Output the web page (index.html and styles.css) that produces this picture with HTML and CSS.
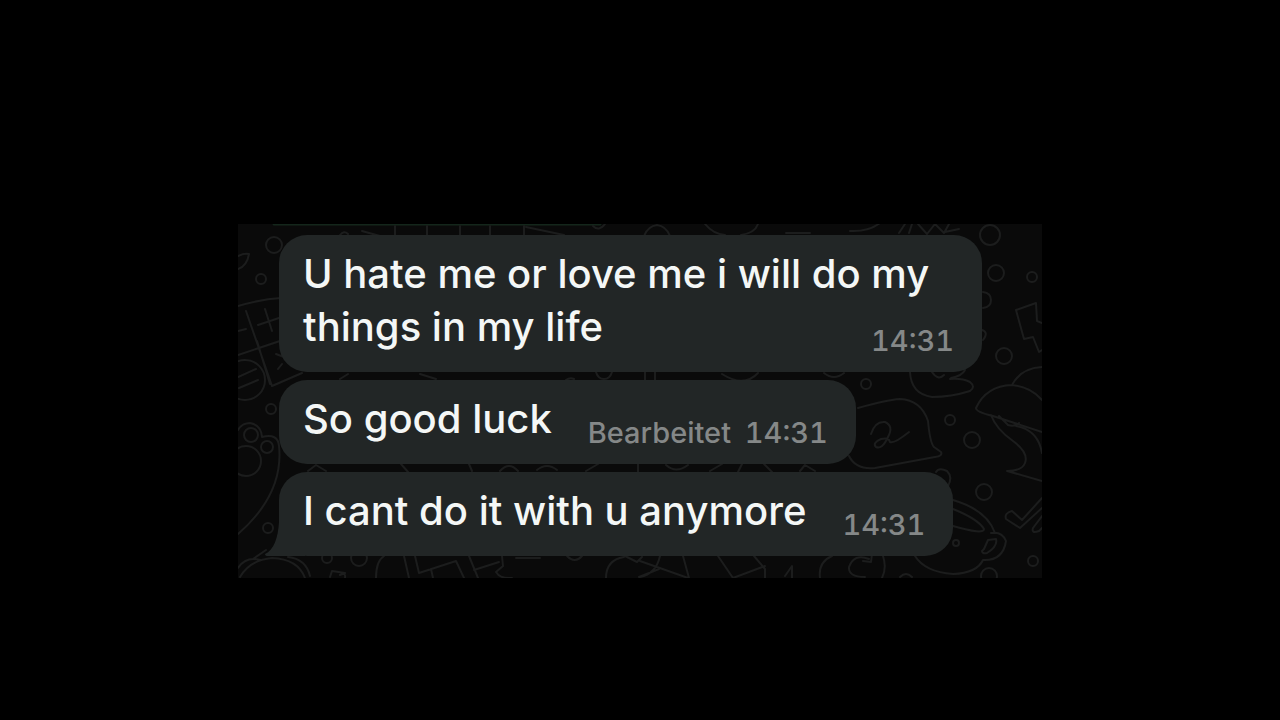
FILE: index.html
```html
<!DOCTYPE html>
<html lang="de">
<head>
  <meta charset="utf-8">
  <title>Chat</title>
  <link rel="stylesheet" href="styles.css">
</head>
<body>

  <main class="chat">
    <svg class="wallpaper" viewBox="238 224 804 354" preserveAspectRatio="xMidYMid slice" aria-hidden="true">
      <!-- top edge -->
      <path class="line-green" d="M274 224 H600"/>
      <path d="M395 226v9M427 226v9M460 226v9M490 226v9M524 226v9M526 227l38 8M593 226q6 6 12-2"/>
      <path d="M340 235q4-5 8-1M362 231l18 5M644 236q4-10 13-11q9 1 13 11M705 224q8 10 20 11M741 235q14-2 17-11M786 233h24M850 231q18 1 30-8M899 233l6-9M909 233l3-9M918 224l9 10l8-10l9 9l5-9M945 232l14-3"/>
      <!-- left side -->
      <circle cx="274" cy="245" r="8"/>
      <circle cx="261" cy="279" r="5"/>
      <path d="M238 256q6-3 11-2q-2 12-11 15"/>
      <path d="M238 306q24-7 43-8M246 311l26 75M238 331l8-2M238 355l42-14M258 325l21-7M265 309l7 22M257 341l13 43M272 386l30-13M276 354l8 3M282 364l-4 5"/>
      <circle cx="245" cy="380" r="20"/>
      <path d="M238 377l18-8M239 388l19-8"/>
      <circle cx="271" cy="409" r="5"/>
      <path d="M238 430q4-7 12-7q11 2 12 14q16-4 17 9q5 48-41 88"/>
      <circle cx="251" cy="435" r="7"/>
      <circle cx="267" cy="447" r="6"/>
      <circle cx="246" cy="461" r="15"/>
      <circle cx="268" cy="528" r="5"/>
      <!-- right side -->
      <circle cx="990" cy="235" r="10"/>
      <circle cx="996" cy="273" r="8"/>
      <circle cx="1032" cy="277" r="5"/>
      <path d="M983 292q8 1 8 8q0 7-8 8"/>
      <path d="M1042 323l-5-2l-1-18l-20 7l8 29l9-2l6 15l3-2"/>
      <circle cx="1004" cy="356" r="8"/>
      <path d="M982 330q7 2 1 10"/>
      <circle cx="866" cy="384" r="5"/>
      <path d="M910 372q1 22 22 25q19 0 38-6q6-4 0-9q-8-4-20-3M932 372q6 9 12 3M951 378q11-2 14-8"/>
      <path d="M858 408q28-8 42-9q21 1 28 22q2 22 6 26l7 5q2 4-6 5l-60 11q-19 2-26-12"/>
      <path d="M871 434q4-13 14-12q9 4 3 15q-6 13-12 10q-4-4 5-8q8-2 9 3q4 2 19-10"/>
      <circle cx="950" cy="420" r="5"/>
      <circle cx="972" cy="440" r="8"/>
      <path d="M976 408q10-22 36-23q19 2 30 15M976 408q0 4 17 8l49 16M1012 385q9-17 30-18M991 415q5 14 22 26q16 12 12 22q-3 8-18 8l35 10M999 416l9 9q7 2 11-2M1016 426q22 4 26 27"/>
      <path d="M936 472q3-5 11-1q6 6 1 15l-9-1"/>
      <circle cx="984" cy="492" r="8"/>
      <path d="M1042 498l-20 22l-10-9q-8 2-6 8l14 9l22-20M1042 516l-9 12q-2 6 6 3l3-3"/>
      <path d="M953 500q34 10 42 33M953 509q25 10 31 20q0 6-31-3M915 556q10 16 38 18q24-1 30-14q20 1 23-19q-4-10-15-8M984 549l4-9l8-1q2 7-9 14q-5 1-5-2z"/>
      <circle cx="956" cy="543" r="3"/>
      <circle cx="1033" cy="561" r="5"/>
      <circle cx="989" cy="576" r="8"/>
      <!-- gaps between the bubbles -->
      <path d="M596 372q2 7 8 7t8-7M645 372v8M655 372v8M722 374q22 14 36-1M824 373q10 8 20 0M566 380q4-3 8-1M420 374l16 5M348 374l-8 5"/>
      <path d="M308 471l8-6l10 6M500 471q9-10 18 0M537 470q10-8 20 0M586 471l12-7M638 464v8M666 465q10 9 22 0M710 471l12-7M742 464l-4 8M764 464l8 8M800 471l5-6l10 6M469 464l3 7M401 464l7 8"/>
      <!-- bottom edge -->
      <path d="M238 568q8-12 22-8M240 577q10-17 32-19q26 1 33 20M266 550l-13 9M288 557q18 2 22 19M330 577l2-6l13 2M340 575q6-3 5 3"/>
      <circle cx="327" cy="558" r="5"/>
      <circle cx="359" cy="558" r="8"/>
      <path d="M376 578q0-17 8-22M404 556l5 22M415 556l4 17l37-12l8 17M433 578l-2-9M469 556l9 22M474 570l25-8M502 556l1 10l-7 6q4 7 16 6M516 558h24"/>
      <path d="M567 556q8 8 15 0M606 578q0-18 18-21M625 556l12 6l5-5M639 577l20-8M640 561l48 17M660 556q-4 18-20 21M683 556l6 22M718 556l15 22l32-12M754 556l11 13v9M785 576l7-10v12M820 578q-2-16 12-22M883 556q4 12-1 22M865 577q-17 0-16-10q5-14 20-8M872 554l-1 8l-8-1M900 577q6-6 12 0"/>
    </svg>

    <ul class="messages">
      <li class="bubble">
        U hate me or love me i will do my things in my life
        <span class="meta"><time>14:31</time></span>
      </li>
      <li class="bubble">
        So good luck
        <span class="meta"><span class="edited">Bearbeitet</span> <time>14:31</time></span>
      </li>
      <li class="bubble">
        <svg class="tail" viewBox="0 0 40 40" aria-hidden="true"><path d="M14 0V6C13 22 9 34 0 38Q0 40 3 40H40V0Z"/></svg>
        I cant do it with u anymore
        <span class="meta"><time>14:31</time></span>
      </li>
    </ul>
  </main>

</body>
</html>
```
FILE: styles.css
```css
body {
  margin: 0;
  padding: 224px 16px 0;
  background-color: #000;
  font-family: Inter, "Liberation Sans", sans-serif;
}

.chat {
  position: relative;
  max-width: 804px;
  margin: 0 auto;
  background-color: #0a0a0a;
  overflow: hidden;
}

.wallpaper {
  position: absolute;
  top: 0;
  left: 0;
  width: 100%;
  height: 100%;
  fill: none;
  stroke: #1c1d1d;
  stroke-width: 2;
  stroke-linecap: round;
  stroke-linejoin: round;
}

.wallpaper .line-green {
  stroke: #14261b;
  stroke-width: 3;
}

.messages {
  position: relative;
  display: flex;
  flex-direction: column;
  align-items: flex-start;
  gap: 8px;
  margin: 0;
  padding: 11px 60px 22px 41px;
  list-style: none;
}

.bubble {
  position: relative;
  display: flow-root;
  box-sizing: border-box;
  max-width: 703px;
  padding: 12px 28px 14px 24px;
  border-radius: 28px;
  background-color: #222626;
  color: #f4f7f6;
  font-size: 40px;
  font-weight: 500;
  line-height: 53px;
}

.meta {
  float: right;
  margin: 23px 0 0 36px;
  color: #858888;
  font-size: 29px;
  line-height: 35px;
  font-variant-numeric: tabular-nums;
}

.edited {
  margin-right: 6px;
}

.tail {
  position: absolute;
  left: -14px;
  bottom: 0;
  width: 40px;
  height: 40px;
  fill: #222626;
}
```
